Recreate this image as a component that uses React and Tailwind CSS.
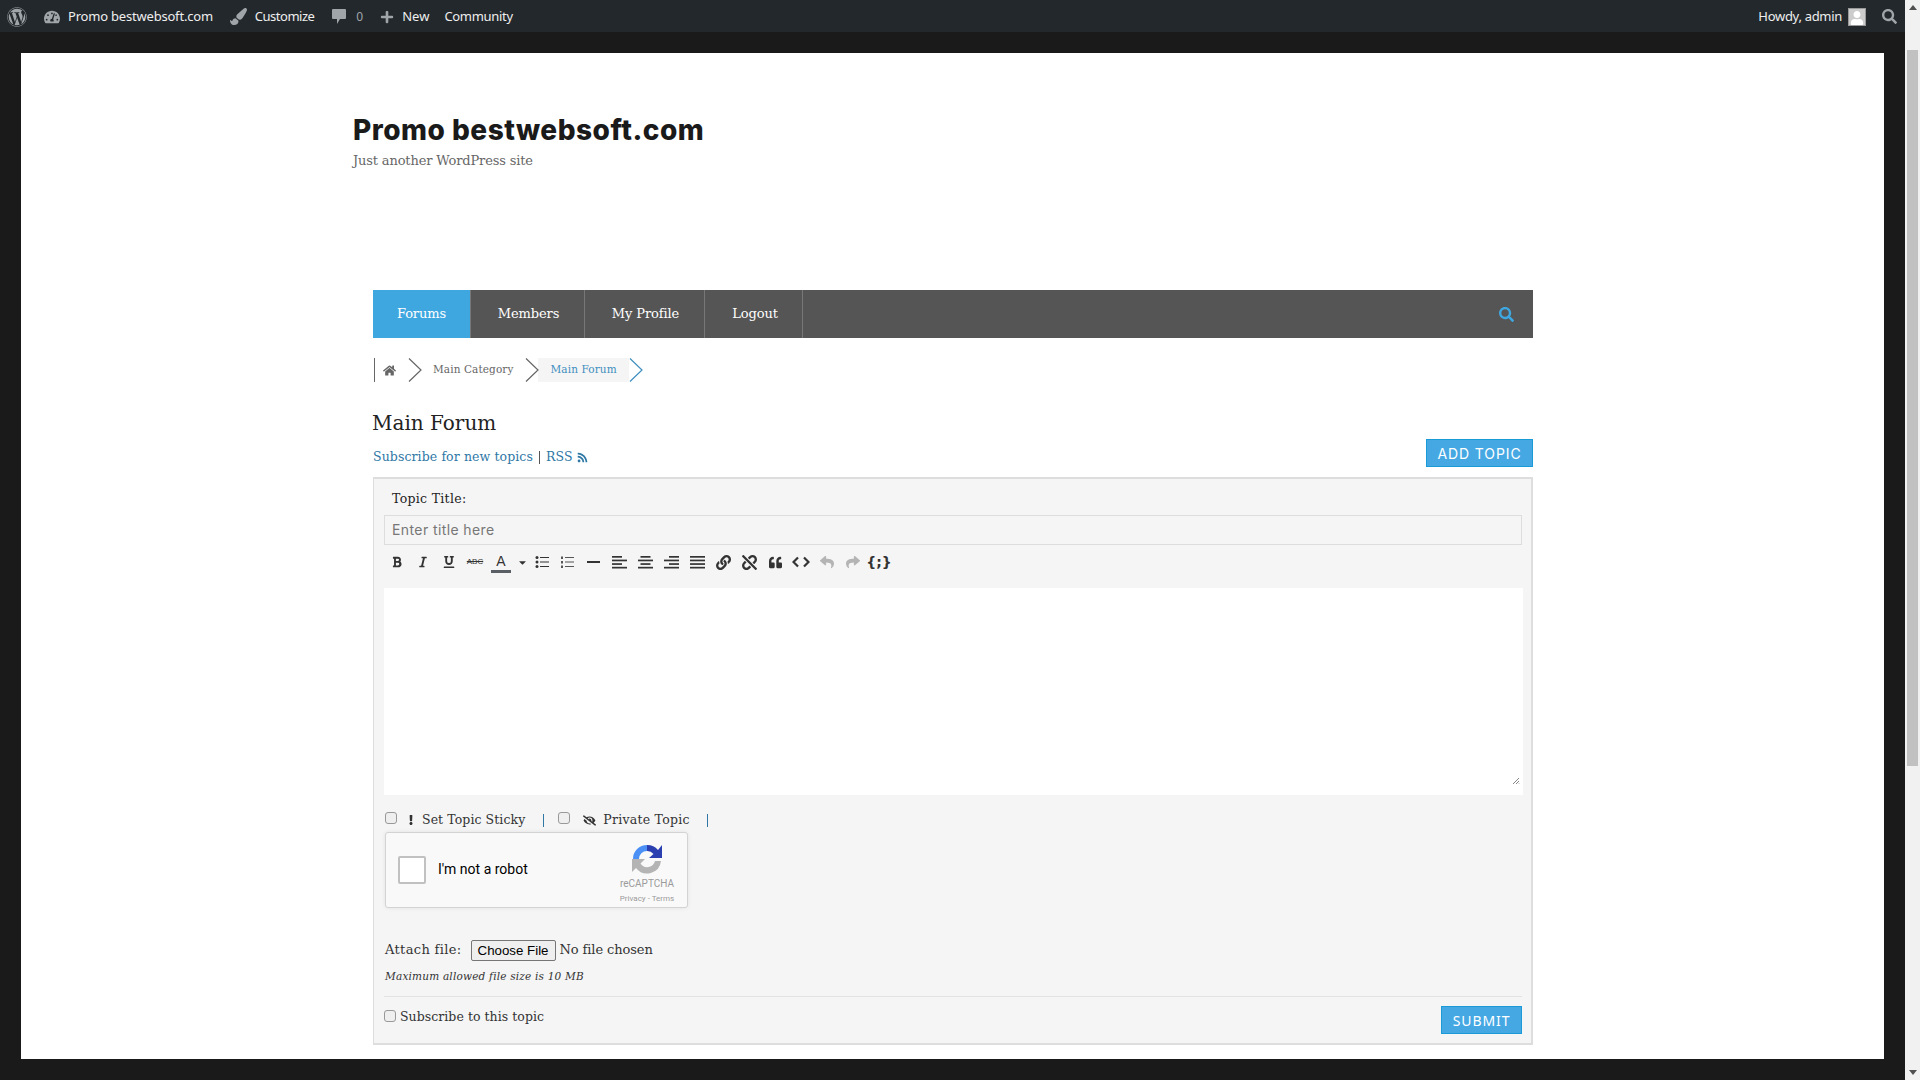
import React from 'react';
import { FaWordpress, FaTachometerAlt, FaPaintBrush, FaPlus, FaSearch, FaHome, FaRss, FaExclamation, FaEyeSlash, FaBold, FaItalic, FaUnderline, FaCaretDown, FaLink, FaUnlink, FaQuoteLeft, FaReply, FaShare, FaUser } from 'react-icons/fa';

const Lines = ({ rows }) => (
  <svg width="15" height="14" viewBox="0 0 15 14" fill="#333">
    {rows.map(([x, w], i) => <rect key={i} x={x} y={1 + i * 3.6} width={w} height="1.7" />)}
  </svg>
);

const Chevron = ({ color = '#666' }) => (
  <svg width="14" height="24" viewBox="0 0 14 24" fill="none" stroke={color} strokeWidth="1.2" className="shrink-0 relative z-10">
    <path d="M1 0.5 L13 12 L1 23.5" />
  </svg>
);

const Tool = ({ children, w = 'w-[26px]' }) => (
  <div className={`${w} h-[20px] flex items-center justify-center text-[#333] shrink-0`}>{children}</div>
);

const Box = ({ className }) => (
  <input type="checkbox" className={`appearance-none w-[12px] h-[12px] rounded-[3px] bg-[#efefef] border border-[#999] shrink-0 ${className}`} />
);

function Toolbar() {
  return (
    <div className="flex items-center h-[20px] mt-[7px]">
      <Tool><FaBold size={12} /></Tool>
      <Tool><FaItalic size={12} /></Tool>
      <Tool><FaUnderline size={12} /></Tool>
      <Tool><span className="font-['Liberation_Sans'] text-[8px] line-through">ABC</span></Tool>
      <Tool>
        <div className="flex flex-col items-center mt-[3px]">
          <span className="font-['Liberation_Sans'] text-[14px] leading-[15px]">A</span>
          <span className="w-[20px] h-[3px] bg-[#5a5f66] mt-[1px]" />
        </div>
      </Tool>
      <Tool w="w-[17px]"><FaCaretDown size={11} /></Tool>
      <Tool w="w-[23px]">
        <svg width="15" height="14" viewBox="0 0 15 14" fill="#333">
          <circle cx="2" cy="2.5" r="1.5" /><circle cx="2" cy="7" r="1.5" /><circle cx="2" cy="11.5" r="1.5" />
          <rect x="5" y="2" width="9" height="1" /><rect x="5" y="6.5" width="9" height="1" /><rect x="5" y="11" width="9" height="1" />
        </svg>
      </Tool>
      <Tool>
        <svg width="15" height="14" viewBox="0 0 15 14" fill="#555">
          <rect x="1" y="1.5" width="2" height="2.5" /><rect x="1" y="6" width="2" height="2.5" /><rect x="1" y="10.5" width="2" height="2.5" />
          <rect x="5" y="2" width="9" height="1" /><rect x="5" y="6.5" width="9" height="1" /><rect x="5" y="11" width="9" height="1" />
        </svg>
      </Tool>
      <Tool><span className="w-[13px] h-[2px] bg-[#333]" /></Tool>
      <Tool><Lines rows={[[0, 10], [0, 15], [0, 10], [0, 15]]} /></Tool>
      <Tool><Lines rows={[[2.5, 10], [0, 15], [2.5, 10], [0, 15]]} /></Tool>
      <Tool><Lines rows={[[5, 10], [0, 15], [5, 10], [0, 15]]} /></Tool>
      <Tool><Lines rows={[[0, 15], [0, 15], [0, 15], [0, 15]]} /></Tool>
      <Tool><FaLink size={15} /></Tool>
      <Tool><FaUnlink size={15} /></Tool>
      <Tool><FaQuoteLeft size={13} /></Tool>
      <Tool>
        <svg width="18" height="12" viewBox="0 0 18 12" fill="none" stroke="#333" strokeWidth="2.2">
          <path d="M6 1.5 L1.5 6 L6 10.5 M12 1.5 L16.5 6 L12 10.5" />
        </svg>
      </Tool>
      <Tool><FaReply size={14} className="text-[#b4b4b4]" /></Tool>
      <Tool><FaShare size={14} className="text-[#b4b4b4]" /></Tool>
      <Tool><span className="font-['DejaVu_Sans'] font-bold text-[14px] leading-none whitespace-nowrap">{'{;}'}</span></Tool>
    </div>
  );
}

function Recaptcha() {
  return (
    <div className="w-[303px] h-[76px] mt-[1px] ml-[1px] bg-[#f9f9f9] border border-[#d3d3d3] rounded-[3px] shadow-[0_0_4px_rgba(0,0,0,0.08)] flex items-center font-['Roboto'] relative">
      <div className="w-[28px] h-[28px] ml-[12px] -mt-[1px] bg-white border-2 border-[#c1c1c1] rounded-[2px]" />
      <span className="ml-[12px] -mt-[1px] text-[14px] text-[#000]">I'm not a robot</span>
      <div className="absolute right-[12px] top-[10px] w-[56px] flex flex-col items-center">
        <svg width="32" height="32" viewBox="0 0 32 32" fill="none">
          <path d="M2 16 A14 14 0 0 1 16 2 L16 8 A8 8 0 0 0 8 16 Z" fill="#4a90f5" />
          <path d="M16 2 A14 14 0 0 1 27 7 L31 2 L31 15 L18 15 L22.5 11 A8 8 0 0 0 16 8 Z" fill="#2b3fb0" />
          <path d="M1 16 L14 16 L9.5 20.5 A8 8 0 0 0 24 18 L30 18 A14 14 0 0 1 5 25 L1 29 Z" fill="#b4b4b4" />
        </svg>
        <span className="text-[10px] leading-[12px] text-[#9b9b9b] mt-[3px]">reCAPTCHA</span>
        <span className="text-[8px] leading-[10px] text-[#9b9b9b] mt-[4px] whitespace-nowrap">Privacy - Terms</span>
      </div>
    </div>
  );
}

const serif = "font-['DejaVu_Serif']";

export default function App() {
  return (
    <div className="h-[1080px] w-[1920px] overflow-hidden flex bg-[#1a1a1a]">
      <div className="flex-1 min-w-0 flex flex-col">
        <header className="h-[32px] bg-[#23282d] flex items-center justify-between text-[13px] text-[#eee] font-['Noto_Sans',sans-serif] shrink-0">
          <div className="flex items-center pt-[1px]">
            <FaWordpress size={20} className="text-[#a0a5aa] ml-[7px]" />
            <FaTachometerAlt size={16} className="text-[#a0a5aa] ml-[17px]" />
            <span className="ml-[8px] tracking-[-0.2px]">Promo bestwebsoft.com</span>
            <FaPaintBrush size={17} className="text-[#a0a5aa] ml-[17px]" />
            <span className="ml-[8px] tracking-[-0.5px]">Customize</span>
            <svg width="16" height="17" viewBox="0 0 16 17" fill="#a0a5aa" className="ml-[17px]">
              <path d="M2 1 H14 Q15 1 15 2 V10 Q15 11 14 11 H9 L6 16 V11 H2 Q1 11 1 10 V2 Q1 1 2 1 Z" />
            </svg>
            <span className="ml-[9px] text-[#a0a5aa] text-[12px]">0</span>
            <FaPlus size={14} className="text-[#a0a5aa] ml-[17px]" />
            <span className="ml-[8px]">New</span>
            <span className="ml-[15px] tracking-[-0.3px]">Community</span>
          </div>
          <div className="flex items-center pt-[1px]">
            <span className="tracking-[-0.3px]">Howdy, admin</span>
            <span className="ml-[6px] w-[18px] h-[18px] bg-[#ccc] border border-[#999] flex items-end justify-center overflow-hidden">
              <FaUser size={14} className="text-white" />
            </span>
            <FaSearch size={15} className="text-[#a0a5aa] ml-[16px] mr-[8px]" />
          </div>
        </header>

        <div className="px-[21px] pt-[21px] flex-1 min-h-0">
          <div className="bg-white h-[1006px] pl-[332px] overflow-hidden">
            <h1 className="font-['Inter'] font-extrabold text-[28px] leading-[36px] mt-[59px] text-[#1a1a1a] tracking-[0.5px]">Promo bestwebsoft.com</h1>
            <p className={`${serif} text-[13px] leading-[20px] mt-[3px] text-[#666] tracking-[-0.15px]`}>Just another WordPress site</p>

            <div className="w-[1160px] ml-[20px] mt-[119px]">
              <nav className={`${serif} h-[48px] bg-[#555] flex items-center text-[13px] text-white tracking-[-0.1px]`}>
                <a className="w-[98px] h-full bg-[#3fa7e0] flex items-center justify-center border-r border-[#777]">Forums</a>
                <a className="w-[114px] h-full pl-[2px] flex items-center justify-center border-r border-[#777]">Members</a>
                <a className="w-[120px] h-full pl-[2px] flex items-center justify-center border-r border-[#777]">My Profile</a>
                <a className="w-[98px] h-full pl-[3px] flex items-center justify-center border-r border-[#777]">Logout</a>
                <FaSearch size={15} className="ml-auto mr-[19px] text-[#3fa7e0]" />
              </nav>

              <div className={`${serif} h-[24px] mt-[20px] flex items-center text-[10.5px] text-[#666] tracking-[0.1px]`}>
                <span className="h-full border-l border-[#666] ml-[1px]" />
                <FaHome size={13} className="ml-[8px]" />
                <span className="ml-[12px]"><Chevron /></span>
                <span className="ml-[11px] whitespace-nowrap">Main Category</span>
                <span className="ml-[11px]"><Chevron /></span>
                <div className="h-full w-[91px] -ml-[1px] bg-[#f5f5f5] flex items-center pl-[13px] whitespace-nowrap text-[#3f8fbf]">Main Forum</div>
                <Chevron color="#3f8fbf" />
              </div>

              <div className="flex justify-between mt-[25px]">
                <div>
                  <h2 className={`${serif} text-[20px] leading-[32px] -ml-[1px] text-[#222] tracking-[0px]`}>Main Forum</h2>
                  <div className={`${serif} text-[12.5px] leading-[20px] mt-[8px] text-[#2f78a6] flex items-center tracking-[0.1px]`}>
                    <span>Subscribe for new topics</span>
                    <span className="mx-[6px] w-[1px] h-[13px] bg-[#555]" />
                    <span>RSS</span>
                    <FaRss size={11} className="ml-[4px]" />
                  </div>
                </div>
                <button className="self-end w-[107px] h-[28px] bg-[#45a8e3] border border-[#1a9bd7] text-white font-['Inter'] text-[14px] tracking-[0.9px]">ADD TOPIC</button>
              </div>

              <div className="mt-[10px] h-[568px] bg-[#f5f5f5] border-2 border-[#ddd] border-l-1 pl-[10px] pr-[10px]">
                <div className={`${serif} text-[12.5px] leading-[20px] mt-[10px] ml-[8px] text-[#222] tracking-[0.3px]`}>Topic Title:</div>
                <div className="mt-[6px] h-[30px] w-[1138px] border border-[#ddd] bg-[#f5f5f5] flex items-center pl-[7px] pb-[1px] font-['Inter'] text-[14px] text-[#777] tracking-[0.4px]">Enter title here</div>
                <Toolbar />
                <div className="mt-[16px] h-[207px] w-[1139px] bg-white relative">
                  <svg width="8" height="8" viewBox="0 0 8 8" className="absolute right-[3px] bottom-[10px]" stroke="#888" strokeWidth="1">
                    <path d="M1 7 L7 1 M4 7 L7 4 M6.5 7 L7 6.5" />
                  </svg>
                </div>

                <div className={`${serif} h-[30px] mt-[10px] flex items-center text-[12.5px] text-[#333]`}>
                  <Box className="ml-[1px] -mt-[5px]" />
                  <FaExclamation size={10} className="ml-[9px] text-[#333]" />
                  <span className="ml-[6px] tracking-[0.08px]">Set Topic Sticky</span>
                  <span className="ml-[18px] w-[1px] h-[13px] bg-[#2f78a6]" />
                  <Box className="ml-[14px] -mt-[5px]" />
                  <FaEyeSlash size={13} className="ml-[13px] text-[#333]" />
                  <span className="ml-[7px] tracking-[0.25px]">Private Topic</span>
                  <span className="ml-[17px] w-[1px] h-[13px] bg-[#2f78a6]" />
                </div>
                <div className="-mt-[4px]"><Recaptcha /></div>

                <div className={`${serif} mt-[30px] h-[24px] flex items-center text-[13px] text-[#333]`}>
                  <span className="ml-[1px] tracking-[0.35px]">Attach file:</span>
                  <button className="ml-[9px] w-[85px] h-[21px] bg-[#efefef] border border-[#767676] rounded-[2px] font-['Liberation_Sans'] text-[13.3px] text-black">Choose File</button>
                  <span className="ml-[4px] tracking-[-0.1px]">No file chosen</span>
                </div>
                <div className={`${serif} italic text-[10.5px] leading-[16px] mt-[6px] ml-[1px] text-[#333] tracking-[0.2px]`}>Maximum allowed file size is 10 MB</div>

                <div className="mt-[12px] w-[1138px] border-t border-[#e3e3e3] flex justify-between pt-[10px]">
                  <label className={`${serif} flex items-center h-[20px] text-[12.5px] text-[#333] tracking-[0.05px]`}>
                    <Box className="-mt-[2px]" />
                    <span className="ml-[4px]">Subscribe to this topic</span>
                  </label>
                  <button className="w-[81px] h-[28px] -mt-[1px] bg-[#45a8e3] border border-[#1a9bd7] text-white font-['Noto_Sans'] text-[14px] tracking-[0.9px]">SUBMIT</button>
                </div>
              </div>
            </div>
          </div>
        </div>
      </div>

      <div className="w-[15px] h-full bg-[#f1f1f1] flex flex-col items-center justify-between relative">
        <div className="w-0 h-0 mt-[5px] border-x-[4px] border-x-transparent border-b-[5px] border-b-[#505050]" />
        <div className="absolute left-[2px] top-[50px] w-[11px] h-[716px] bg-[#c1c1c1]" />
        <div className="w-0 h-0 mb-[5px] border-x-[4px] border-x-transparent border-t-[5px] border-t-[#505050]" />
      </div>
    </div>
  );
}
